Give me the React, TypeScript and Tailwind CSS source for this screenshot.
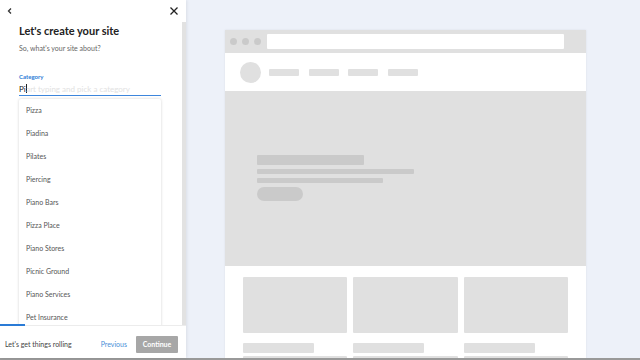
import React from "react";

const items = [
  "Pizza",
  "Piadina",
  "Pilates",
  "Piercing",
  "Piano Bars",
  "Pizza Place",
  "Piano Stores",
  "Picnic Ground",
  "Piano Services",
  "Pet Insurance",
];

export default function App() {
  return (
    <div
      className="w-[640px] h-[360px] flex flex-col overflow-hidden bg-[#edf1f9]"
      style={{ fontFamily: "Lato, 'Open Sans', sans-serif" }}
    >
      <div className="flex flex-1 min-h-0">
        {/* Left panel */}
        <div className="w-[186px] bg-white flex flex-col shadow-[1px_0_3px_rgba(0,0,0,0.08)] z-10">
          <div className="h-[22px] flex items-center justify-between px-[5px]">
            <svg width="8" height="8" viewBox="0 0 8 8" className="ml-[1px]">
              <path d="M5 1.5 L2.5 4 L5 6.5" fill="none" stroke="#333" strokeWidth="1.3" />
            </svg>
            <svg width="10" height="10" viewBox="0 0 10 10" className="mr-[2px]">
              <path d="M1.5 1.5 L8.5 8.5 M8.5 1.5 L1.5 8.5" fill="none" stroke="#222" strokeWidth="1.3" />
            </svg>
          </div>
          <div className="flex flex-1 min-h-0">
            <div className="flex-1 min-w-0 overflow-hidden pl-[19px] pr-[21px]">
              <div className="text-[11px] font-bold text-[#222] leading-[16px] mt-[1px]">
                Let's create your site
              </div>
              <div className="text-[7px] text-[#666] leading-[10px] mt-[4px]">
                So, what's your site about?
              </div>
              <div className="text-[6px] font-bold text-[#2a7bd6] leading-[8px] mt-[20px]">
                Category
              </div>
              <div className="relative h-[14px] mt-[1px] border-b-[1.5px] border-[#3d86dc] flex items-center">
                <span className="text-[8px] text-[#222] leading-[12px]">Pi</span>
                <span className="w-[0.5px] h-[9px] bg-[#222]" />
                <span className="text-[8px] text-[#e2e2e2] leading-[12px]">art typing and pick a category</span>
              </div>
              <div className="mt-[3px] h-[240px] bg-white rounded-[2px] shadow-[0_0_3px_rgba(0,0,0,0.18)]">
                {items.map((it) => (
                  <div key={it} className="h-[23px] flex items-center px-[7px] text-[7px] text-[#555]">
                    {it}
                  </div>
                ))}
              </div>
            </div>
            <div className="w-[4px] bg-[#e2e2e2]" />
          </div>
          <div className="h-[33px] relative border-t border-[#ececec] flex items-center px-[5px] pt-[4px]">
            <div className="absolute left-0 top-[-2px] h-[2px] w-[25px] bg-[#2a7bd6]" />
            <span className="text-[7px] text-[#444] flex-1 leading-[10px]">Let's get things rolling</span>
            <span className="text-[7px] text-[#4a8fd8] mr-[9px] leading-[10px]">Previous</span>
            <div className="w-[42px] h-[17px] bg-[#a7a7a7] rounded-[1px] flex items-center justify-center text-[7px] font-bold text-white mr-[3px]">
              Continue
            </div>
          </div>
        </div>
        {/* Preview */}
        <div className="flex-1 pl-[39px] pt-[30px] overflow-hidden">
          <div className="w-[361px] bg-white shadow-[0_0_2px_rgba(0,0,0,0.08)]">
            <div className="h-[23px] bg-[#e0e0e0] flex items-center px-[5px] gap-[5px]">
              <div className="w-[7px] h-[7px] rounded-full bg-[#cacaca]" />
              <div className="w-[7px] h-[7px] rounded-full bg-[#cacaca]" />
              <div className="w-[7px] h-[7px] rounded-full bg-[#cacaca]" />
              <div className="w-[297px] h-[15px] bg-white ml-[1px] rounded-[1px]" />
            </div>
            <div className="h-[38px] flex items-center pl-[15px] gap-[10px]">
              <div className="w-[21px] h-[21px] rounded-full bg-[#e0e0e0] mr-[-2px]" />
              <div className="w-[30px] h-[7px] bg-[#e0e0e0] rounded-[1px]" />
              <div className="w-[30px] h-[7px] bg-[#e0e0e0] rounded-[1px]" />
              <div className="w-[30px] h-[7px] bg-[#e0e0e0] rounded-[1px] ml-[-1px]" />
              <div className="w-[30px] h-[7px] bg-[#e0e0e0] rounded-[1px]" />
            </div>
            <div className="h-[175px] bg-[#e0e0e0] pl-[32px] pt-[64px] flex flex-col">
              <div className="w-[107px] h-[10px] bg-[#cacaca] rounded-[1px]" />
              <div className="w-[157px] h-[5px] bg-[#cacaca] rounded-[1px] mt-[4px]" />
              <div className="w-[126px] h-[5px] bg-[#cacaca] rounded-[1px] mt-[4px]" />
              <div className="w-[46px] h-[14px] bg-[#cacaca] rounded-full mt-[4px]" />
            </div>
            <div className="px-[18px] pt-[11px] pb-[20px] grid grid-cols-3 gap-x-[6px]">
              {[0, 1, 2].map((i) => (
                <div key={i} className="flex flex-col">
                  <div className="h-[56px] bg-[#e0e0e0] rounded-[1px]" />
                  <div className="w-[71px] h-[10px] bg-[#e0e0e0] rounded-[1px] mt-[10px]" />
                  <div className="h-[6px] bg-[#e0e0e0] rounded-[1px] mt-[3px]" />
                  <div className="h-[6px] bg-[#e0e0e0] rounded-[1px] mt-[3px]" />
                </div>
              ))}
            </div>
          </div>
        </div>
      </div>
      <div className="h-[2px] bg-[#999]" />
    </div>
  );
}
